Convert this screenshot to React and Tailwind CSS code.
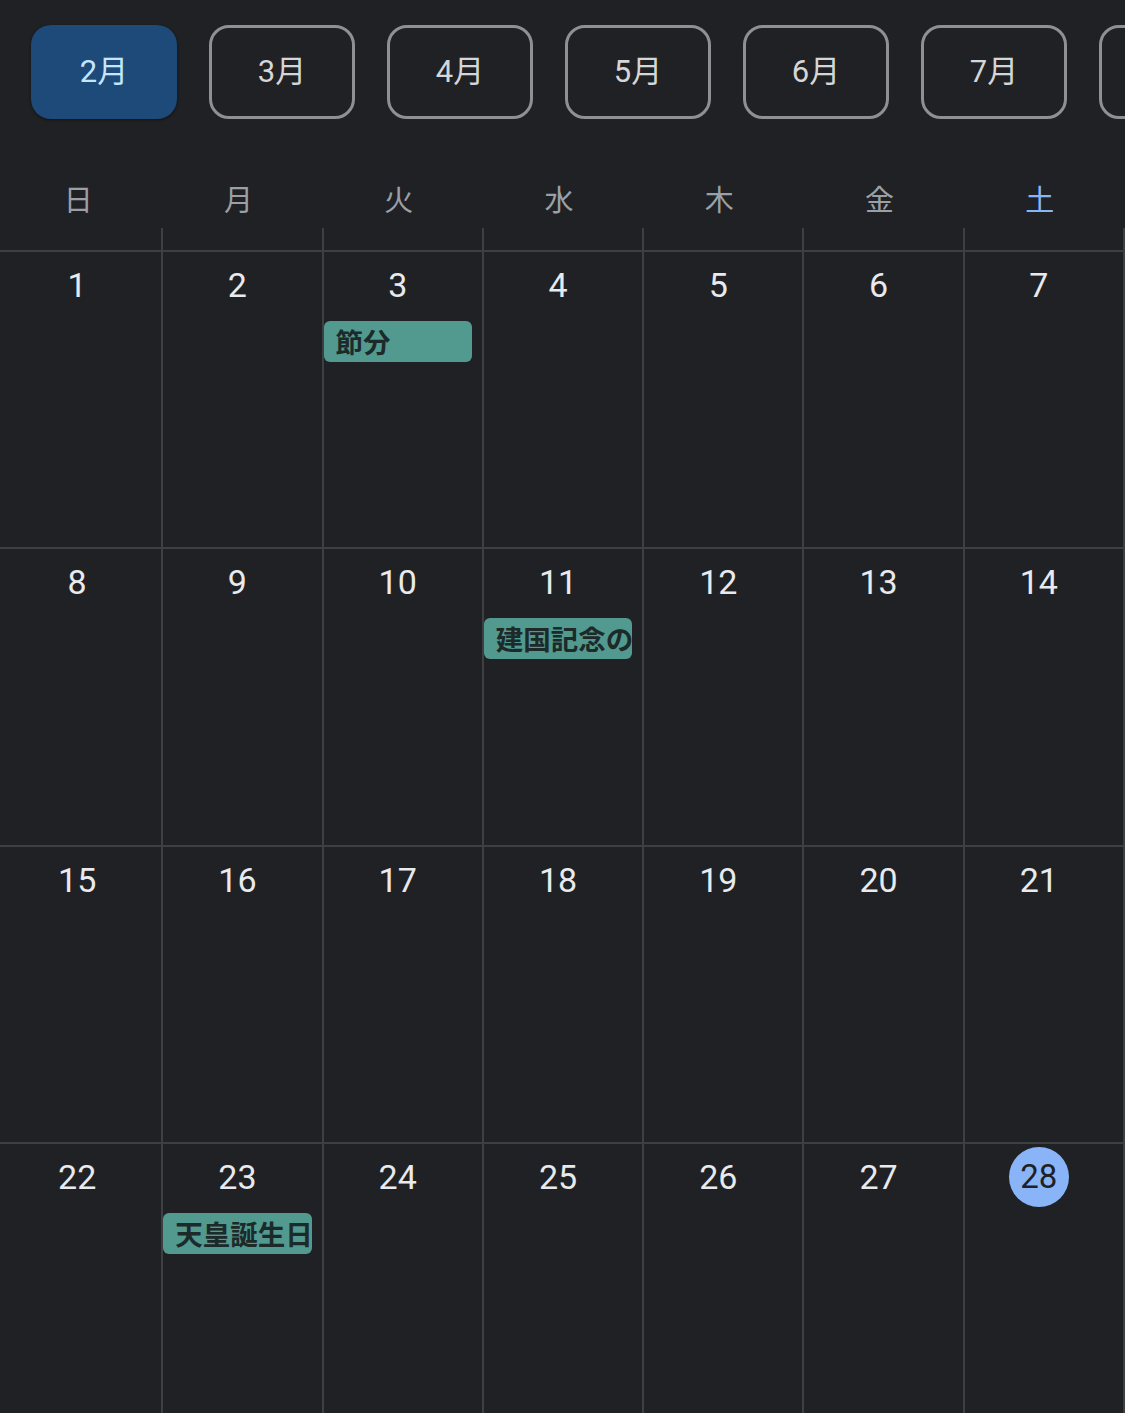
import React from "react";

const months = ["2月", "3月", "4月", "5月", "6月", "7月", "8月"];
const weekdays = ["日", "月", "火", "水", "木", "金", "土"];

const events = {
  3: "節分",
  11: "建国記念の日",
  23: "天皇誕生日",
};

const today = 28;

const weeks = [
  [1, 2, 3, 4, 5, 6, 7],
  [8, 9, 10, 11, 12, 13, 14],
  [15, 16, 17, 18, 19, 20, 21],
  [22, 23, 24, 25, 26, 27, 28],
];

const numFont = { fontFamily: "Roboto, 'Noto Sans CJK JP', sans-serif" };

export default function App() {
  return (
    <div
      className="h-[1413px] w-[1125px] overflow-hidden bg-[#202124] text-[#e8eaed]"
      style={{ fontFamily: "'Noto Sans CJK JP', 'Noto Sans', sans-serif" }}
    >
      {/* month tabs */}
      <div className="flex gap-[32px] pl-[31px] pt-[25px]">
        {months.map((m, i) => (
          <button
            key={m}
            className={`flex h-[94px] w-[146px] shrink-0 items-center justify-center rounded-[20px] text-[31px] ${
              i === 0
                ? "bg-[#1d4a78] text-[#c2e7ff] shadow-[0_1px_3px_rgba(0,0,0,0.5)]"
                : "border-[3px] border-[#8e9092] text-[#d4d6d8]"
            }`}
            style={numFont}
          >
            {m}
          </button>
        ))}
      </div>

      {/* weekday header */}
      <div className="mt-[59px] grid grid-cols-7 pl-[3px]">
        {weekdays.map((d, i) => (
          <div
            key={d}
            className={`pr-[10px] text-center text-[29px] leading-[40px] ${
              i === 6 ? "text-[#8ab4f8]" : "text-[#9aa0a6]"
            }`}
          >
            {d}
          </div>
        ))}
      </div>
      <div className="mt-[10px] grid h-[22px] grid-cols-7 pl-[3px]">
        {weekdays.map((d) => (
          <div key={d} className="border-r-2 border-[#3c4043]" />
        ))}
      </div>

      {/* month grid */}
      {weeks.map((week, wi) => (
        <div key={wi} className="h-[297.33px] border-t-2 border-[#3c4043] pl-[3px]">
          <div className="grid h-full grid-cols-7">
            {week.map((day) => (
              <div key={day} className="flex flex-col border-r-2 border-[#3c4043] pr-[10px]">
                <div className="mt-[13px] flex h-[40px] items-center justify-center">
                  {day === today ? (
                    <span
                      className="flex h-[60px] w-[60px] items-center justify-center rounded-full bg-[#8ab4f8] text-[33px] text-[#202124]"
                      style={numFont}
                    >
                      {day}
                    </span>
                  ) : (
                    <span className="text-[34px] leading-none" style={numFont}>
                      {day}
                    </span>
                  )}
                </div>
                {events[day] && (
                  <div className="mt-[16px] flex h-[41px] items-center overflow-hidden whitespace-nowrap rounded-[6px] bg-[#52998f] pl-[12px] text-[27.5px] font-bold text-[#1c2a29]">
                    {events[day]}
                  </div>
                )}
              </div>
            ))}
          </div>
        </div>
      ))}
    </div>
  );
}
